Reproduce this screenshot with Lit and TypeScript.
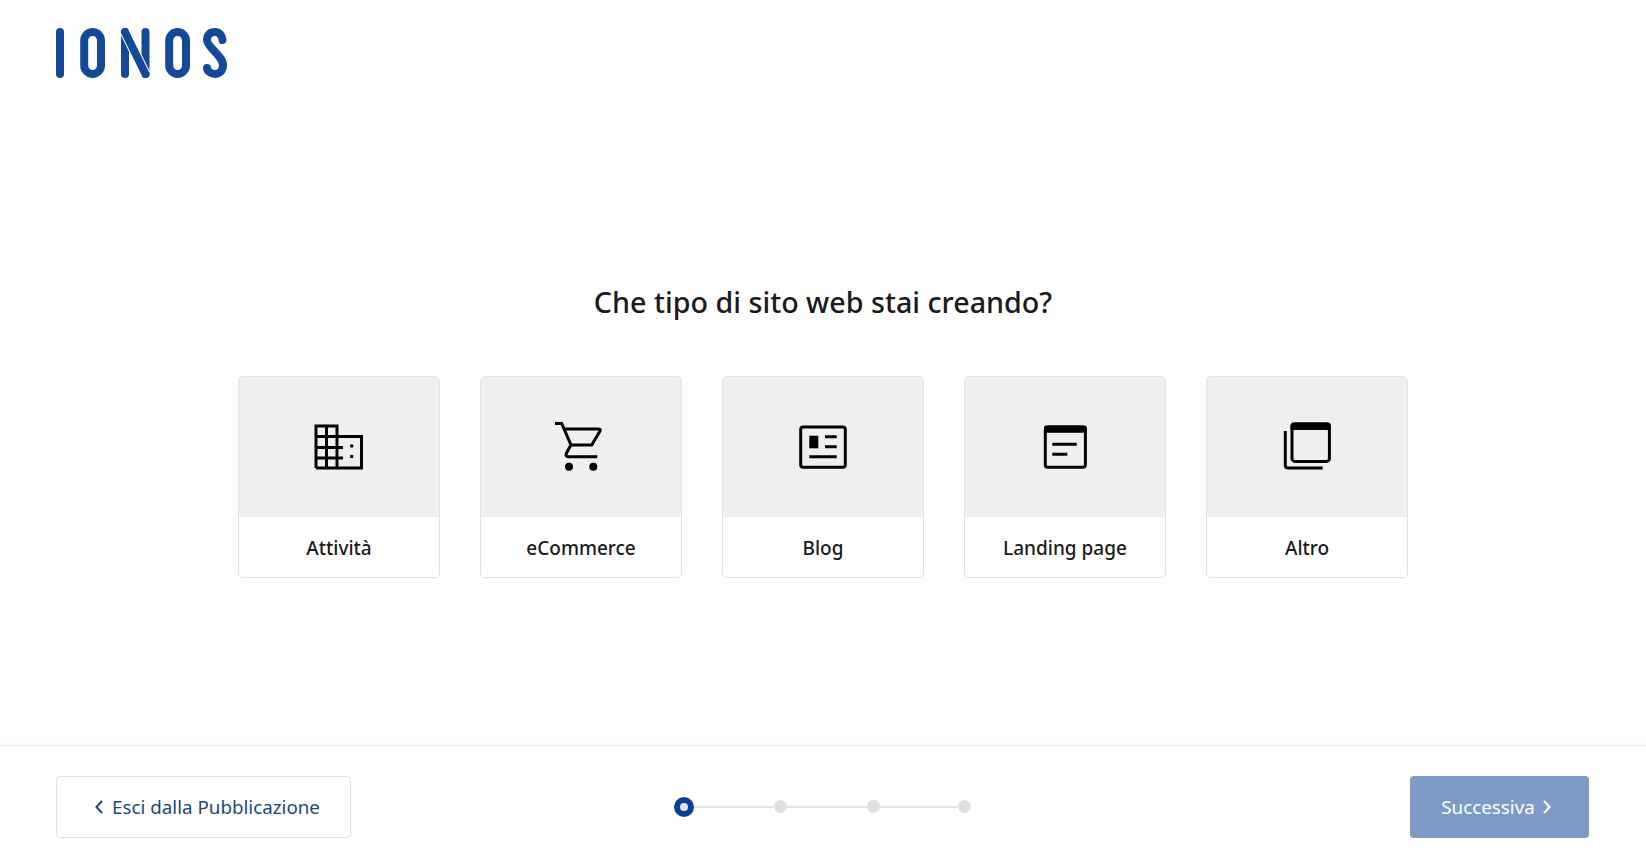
import { LitElement, html, css, svg } from 'lit';
import { customElement } from 'lit/decorators.js';

// icons share a 64x64 box, centred in the grey part of the card
const ICONS = {
    building: svg`
        <path d="M9 53.5V11.5H30V53.5M9 22H30M9 33H36M9 43.5H36M19.5 11.5V53.5M30 22H54.5V53.5H9" />
        <rect class="solid" x="43.2" y="30" width="3" height="3" />
        <rect class="solid" x="43.2" y="40.5" width="3" height="3" />`,
    cart: svg`
        <path d="M6 9H12.7L22 30.5H42.7L51 16.5Q51.8 14.5 49.5 14.5H14.3M22 30.5L17.5 38.5Q16 42.2 19.5 42.2H48.3" />
        <circle class="solid" cx="20" cy="52.2" r="4" />
        <circle class="solid" cx="44.3" cy="52.2" r="4" />`,
    blog: svg`
        <rect x="9.7" y="12.4" width="44.6" height="40.3" rx="2.5" />
        <rect class="solid" x="18.3" y="21.2" width="9" height="12.6" />
        <path d="M34 22.2H45.7M34 32.2H45.7M18.3 42.2H45.7" />`,
    landing: svg`
        <rect x="12.3" y="12.4" width="40.1" height="40.3" rx="2.5" />
        <path class="solid" d="M11 18.2V13.5Q11 11 13.5 11H51.3Q53.8 11 53.8 13.5V18.2Z" />
        <path d="M19.3 29.8H43.7M19.3 39.8H34.3" />`,
    other: svg`
        <rect x="17" y="9.5" width="37.4" height="37.4" rx="3" />
        <path class="solid" d="M15.6 15.5V11Q15.6 8 18.6 8H52.8Q55.8 8 55.8 11V15.5Z" />
        <path d="M10.3 16.5V50.5Q10.3 53.5 13.3 53.5H47.7" />`,
};

const SITE_TYPES = [
    { label: 'Attività', icon: ICONS.building },
    { label: 'eCommerce', icon: ICONS.cart },
    { label: 'Blog', icon: ICONS.blog },
    { label: 'Landing page', icon: ICONS.landing },
    { label: 'Altro', icon: ICONS.other },
];

// distance between the step dots, they are not quite even in the original
const STEP_LINES = [80, 79.5, 78.5];

@customElement('app-root')
export class AppRoot extends LitElement {

    static styles = css`
        :host {
            display: flex;
            flex-direction: column;
            height: 867px;
            overflow: hidden;
            background: #ffffff;
            font-family: "Noto Sans", "Open Sans", sans-serif;
            color: #1a1a1a;
        }

        .header {
            padding: 28px 56px 0;
        }

        .logo {
            display: block;
            width: 172px;
            height: 50px;
        }

        .logo * {
            fill: none;
            stroke: #14499a;
            stroke-width: 8;
            stroke-linecap: round;
        }

        .logo .gap {
            stroke: #ffffff;
            stroke-width: 10;
            stroke-linecap: butt;
        }

        .main {
            flex: 1;
            display: flex;
            flex-direction: column;
            align-items: center;
            padding-top: 204px;
        }

        h1 {
            margin: 0 0 54px;
            font-size: 28.7px;
            line-height: 40px;
            font-weight: 500;
        }

        .cards {
            display: grid;
            grid-template-columns: repeat(5, 202px);
            gap: 40px;
        }

        .card {
            display: flex;
            flex-direction: column;
            height: 202px;
            box-sizing: border-box;
            border: 1px solid #e2e2e2;
            border-radius: 5px;
            overflow: hidden;
            background: #ffffff;
        }

        .card-image {
            height: 140px;
            display: flex;
            align-items: center;
            justify-content: center;
            background: #efefef;
        }

        .card-image svg {
            width: 64px;
            height: 64px;
        }

        .card-image svg * {
            fill: none;
            stroke: #000000;
            stroke-width: 3;
        }

        .card-image svg .solid {
            fill: #000000;
            stroke: none;
        }

        .card-label {
            flex: 1;
            display: flex;
            align-items: center;
            justify-content: center;
            padding-top: 2px;
            font-size: 19px;
            font-weight: 500;
        }

        .footer {
            display: grid;
            grid-template-columns: 1fr auto 1fr;
            align-items: center;
            height: 122px;
            box-sizing: border-box;
            padding: 0 57px 0 56px;
            border-top: 1px solid #e9e9e9;
            box-shadow: 0 -6px 14px rgba(0, 0, 0, 0.018);
        }

        .btn {
            display: inline-flex;
            align-items: center;
            justify-content: center;
            gap: 8px;
            height: 62px;
            box-sizing: border-box;
            border-radius: 4px;
            font-family: inherit;
            font-size: 18.8px;
        }

        .btn svg {
            width: 10px;
            height: 16px;
            fill: none;
            stroke: currentColor;
            stroke-width: 2;
        }

        .btn--back {
            justify-self: start;
            width: 295px;
            padding-left: 13px;
            border: 1px solid #e2e2e2;
            background: #ffffff;
            color: #1d4a78;
        }

        .btn--next {
            justify-self: end;
            width: 179px;
            gap: 7px;
            padding-right: 12px;
            border: 0;
            background: #7c9bc6;
            color: #ffffff;
        }

        .stepper {
            display: flex;
            align-items: center;
        }

        .dot {
            width: 13px;
            height: 13px;
            border-radius: 50%;
            background: #e0e0e0;
        }

        .dot--active {
            width: 20px;
            height: 20px;
            box-sizing: border-box;
            border: 6px solid #0b3f96;
            background: #dfe6f2;
        }

        .line {
            height: 2px;
            background: #e3e3e3;
        }
    `;

    render() {
        return html`
            <div class="header">
                <svg class="logo" viewBox="56 28 172 50" role="img" aria-label="IONOS">
                    <line x1="60" y1="32" x2="60" y2="74" />
                    <rect x="84.2" y="32" width="16.8" height="42" rx="8.4" />
                    <line x1="125" y1="32" x2="125" y2="74" />
                    <line x1="145.5" y1="32" x2="145.5" y2="74" />
                    <line class="gap" x1="125" y1="32" x2="145.5" y2="74" />
                    <line x1="125" y1="32" x2="145.5" y2="74" />
                    <rect x="169.2" y="32" width="16.8" height="42" rx="8.4" />
                    <path d="M222.5 40C222 35 219 32 215 32C210 32 207 35 207 40C207 47 223 56 223 65C223 71 219 74 215 74C211 74 207 71 207 68" />
                </svg>
            </div>
            <div class="main">
                <h1>Che tipo di sito web stai creando?</h1>
                <div class="cards">
                    ${SITE_TYPES.map(type => html`
                        <div class="card">
                            <div class="card-image">
                                <svg viewBox="0 0.5 64 64">${type.icon}</svg>
                            </div>
                            <div class="card-label">${type.label}</div>
                        </div>
                    `)}
                </div>
            </div>
            <div class="footer">
                <button class="btn btn--back">
                    <svg viewBox="0 0 10 16"><path d="M8 2L2.5 8L8 14" /></svg>
                    Esci dalla Pubblicazione
                </button>
                <div class="stepper">
                    <div class="dot dot--active"></div>
                    ${STEP_LINES.map(width => html`
                        <div class="line" style="width: ${width}px"></div>
                        <div class="dot"></div>
                    `)}
                </div>
                <button class="btn btn--next">
                    Successiva
                    <svg viewBox="0 0 10 16"><path d="M2 2L7.5 8L2 14" /></svg>
                </button>
            </div>
        `;
    }
}
